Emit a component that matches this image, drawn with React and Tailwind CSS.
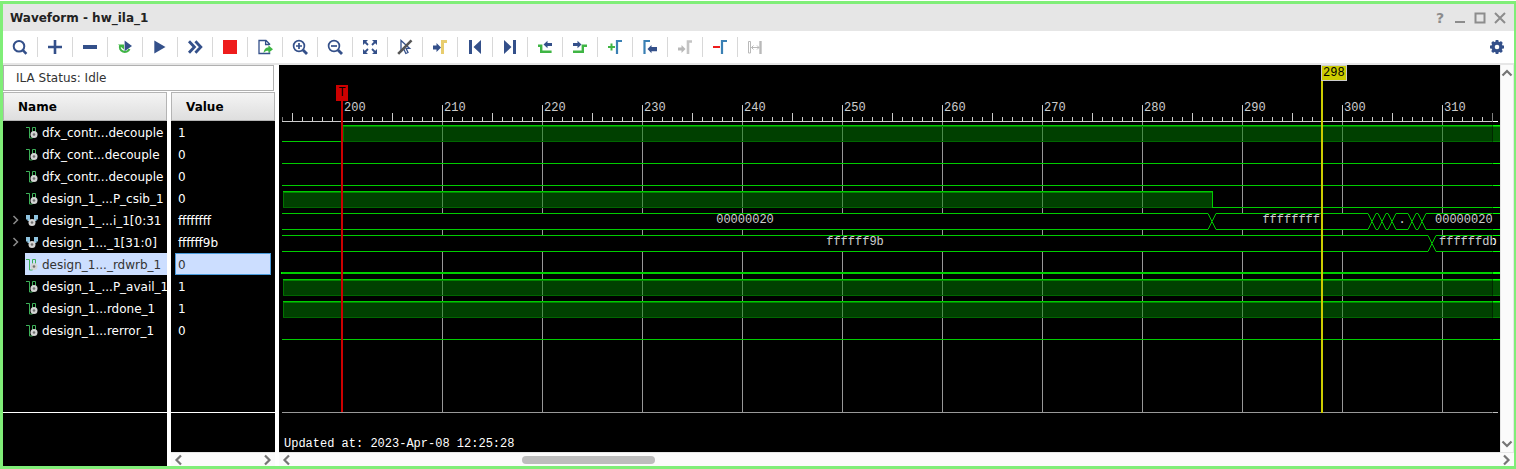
import React from "react";

const BLUE = "#34508a";
const GREEN = "#3fb544";
const STEEL = "#3a80b4";

const toolIcons = [
  ["Find", <g fill="none" stroke={BLUE} strokeWidth="2"><circle cx="7" cy="7.3" r="5.3" /><path d="M10.8 11.2l3.6 3.6" strokeWidth="2.6" /></g>],
  ["Add", <path d="M8 1v14M1 8h14" stroke={BLUE} strokeWidth="2.6" />],
  ["Remove", <path d="M1 8h14" stroke={BLUE} strokeWidth="4" />],
  ["Auto re-trigger", <g><path d="M3.2 6.500a5 4.600 0 1 0 9.300 3.500" fill="none" stroke={GREEN} strokeWidth="2" /><path d="M1 5.500h6v5z" fill={GREEN} /><path d="M7.6 1.6v10.6l7.4-5.3z" fill={BLUE} /></g>],
  ["Run trigger", <path d="M2.3 1.5v13L13.5 8z" fill={BLUE} />],
  ["Run trigger immediate", <path d="M2 2.3L7.4 8 2 13.7M8.4 2.3L13.8 8l-5.4 5.7" fill="none" stroke={BLUE} strokeWidth="2.8" />],
  ["Stop trigger", <rect x="1" y="1" width="14" height="14" fill="#ee1c1c" />],
  ["Export data", <g><path d="M12.6 6V5L9 1.5H2v13h10.6v-1.2M8.6 1.5v4h4" fill="none" stroke={BLUE} strokeWidth="1.3" /><path d="M6.6 14.2c.3-4 2-5.6 4.8-5.7V6.2l4.6 4-4.600 3.800v-2.300c-2.200 0-3.600.6-4.800 2.500z" fill={GREEN} /></g>],
  ["Zoom in", <g fill="none" stroke={BLUE} strokeWidth="1.7"><circle cx="7" cy="7" r="5.400" /><path d="M11 11l4 4" strokeWidth="2.8" /><path d="M4 7h6M7 4v6" /></g>],
  ["Zoom out", <g fill="none" stroke={BLUE} strokeWidth="1.7"><circle cx="7" cy="7" r="5.400" /><path d="M11 11l4 4" strokeWidth="2.8" /><path d="M4 7h6" /></g>],
  ["Zoom fit", <g><path d="M1 1h5L1 6zM15 1v5l-5-5zM1 15v-5l5 5zM15 15h-5l5-5z" fill={BLUE} /><path d="M2 2l4 4M14 2l-4 4M2 14l4-4M14 14l-4-4" stroke={BLUE} strokeWidth="1.8" /></g>],
  ["Cursor selection", <g><path d="M4 1.500v11l2.800-2.500 2 4.500 2.200-1-2-4.200h3.600z" fill="none" stroke={BLUE} strokeWidth="1.3" /><path d="M1.200 14.800L14.500 1.300" stroke="#555" strokeWidth="2.600" /></g>],
  ["Go to cursor", <g><path d="M1 6.500h3.500v-2.500l4.500 4.500-4.500 4.500v-2.500h-3.500z" fill={BLUE} /><path d="M10.500 15V2.500H15" fill="none" stroke="#e8cd6e" strokeWidth="3" /></g>],
  ["Previous transition", <path d="M2 1h3v14h-3zM14 1v14L6.500 8z" fill={BLUE} />],
  ["Next transition", <path d="M11 1h3v14h-3zM2 1v14l7.500-7z" fill={BLUE} />],
  ["Previous edge", <g><path d="M1 6.800h3.200v6H14.600" fill="none" stroke={GREEN} strokeWidth="2.400" /><path d="M6.500 5.500l4-3.800v2.200H15v3.200h-4.500v2.200z" fill={BLUE} /></g>],
  ["Next edge", <g><path d="M1 12.800h9.800v-6H15" fill="none" stroke={GREEN} strokeWidth="2.400" /><path d="M9.500 5.500l-4-3.800v2.200H1v3.200h4.500v2.200z" fill={BLUE} /></g>],
  ["Add marker", <g><path d="M1 8h7M4.500 4.500v7" stroke={GREEN} strokeWidth="2" /><path d="M10 15V2h5" fill="none" stroke={STEEL} strokeWidth="2.200" /></g>],
  ["Previous marker", <g><path d="M2.500 15V2H8" fill="none" stroke={STEEL} strokeWidth="2.200" /><path d="M5.500 10l4-4v2H15v4.200H9.500v2z" fill={BLUE} /></g>],
  ["Next marker", <g><path d="M1 8.500h3.500v-2.500l4 4-4 4v-2.500H1z" fill="#b9b9b9" /><path d="M11 15V2.500h4" fill="none" stroke="#c4c4c4" strokeWidth="2.600" /></g>],
  ["Delete marker", <g><path d="M1 8h7" stroke="#ee1c1c" strokeWidth="2" /><path d="M10 15V2h5" fill="none" stroke={STEEL} strokeWidth="2.200" /></g>],
  ["Swap cursors", <g fill="none" stroke="#b9b9b9"><path d="M1.500 2.500h2v11.500h-2z" /><path d="M13.500 2v13" strokeWidth="2.400" /><path d="M4.500 8.500h7.500M6.500 6.500l-2 2 2 2M10 6.500l2 2-2 2" /></g>],
];

const rows = [
  { name: "dfx_contr...decouple", value: "1" },
  { name: "dfx_cont...decouple", value: "0" },
  { name: "dfx_contr...decouple", value: "0" },
  { name: "design_1_...P_csib_1", value: "0" },
  { name: "design_1_...i_1[0:31", value: "ffffffff", bus: true },
  { name: "design_1..._1[31:0]", value: "ffffff9b", bus: true },
  { name: "design_1..._rdwrb_1", value: "0", selected: true },
  { name: "design_1_...P_avail_1", value: "1" },
  { name: "design_1...rdone_1", value: "1" },
  { name: "design_1...rerror_1", value: "0" },
];

function ToolIcon({ children }) {
  return <svg viewBox="0 0 16 16" className="size-4" aria-hidden="true">{children}</svg>;
}

function SignalIcon({ bus }) {
  return (
    <svg viewBox="0 0 12 12" className="size-3 shrink-0" aria-hidden="true">
      {bus ? (
        <path d="M0 0h4v6H1.500V4.500H0zM8 0h4v4.500h-1.500V6H8z" fill="#8fc4e0" />
      ) : (
        <path d="M0 .5h3.500v10.500H6.500V.5h3v5" fill="none" stroke="#3cb058" />
      )}
      <circle cx={bus ? 6 : 8} cy="7.500" r="3.500" fill="#d4d4d4" />
      <circle cx={bus ? 6 : 8} cy="7.500" r="1.300" fill="#707070" />
    </svg>
  );
}

function Chevron({ className, d }) {
  return (
    <svg viewBox="0 0 12 12" className={className} aria-hidden="true">
      <path d={d} fill="none" stroke="#757575" strokeWidth="2.200" />
    </svg>
  );
}

const LEFT = "M8 1.500L3.500 6 8 10.500";
const RIGHT = "M4 1.500L8.500 6 4 10.500";
const UP = "M1.500 8.500L6 4l4.500 4.500";
const DOWN = "M1.500 3.500L6 8l4.500-4.500";

const timeX = (n) => 63 + (n - 200) * 10;
const FAR = 6000;

function High({ y, from, to = FAR }) {
  const w = to - from;
  return (
    <g>
      <rect x={from} y={y - 15} width={w} height="16" fill="#00a000" fillOpacity=".5" />
      <rect x={from} y={y} width={w} height="1" fill="#008000" />
      <rect x={from} y={y - 15} width="1" height="15" fill="#009000" />
      <rect x={from} y={y - 15} width={w} height="1" fill="#00a800" />
      <rect x={from} y={y - 16} width={w} height="1" fill="#0f0" />
    </g>
  );
}

function Low({ y, from = 3, to = FAR, bold }) {
  return <rect x={from} y={bold ? y - 1 : y} width={to - from} height={bold ? 2 : 1} fill="#0f0" />;
}

function Bus({ y, edges }) {
  const top = y - 15.5;
  const mid = y - 7.5;
  const bottom = y + 0.5;
  return edges.slice(0, -1).map((a, i) => {
    const b = edges[i + 1];
    return (
      <polygon
        key={a}
        points={`${a},${mid} ${a + 4},${top} ${b - 4},${top} ${b},${mid} ${b - 4},${bottom} ${a + 4},${bottom}`}
        fill="#000"
        stroke="#0f0"
      />
    );
  });
}

function Wave() {
  const ticks = Array.from({ length: 121 }, (_, i) => 195 + i);
  return (
    <svg className="block h-[387px] w-full bg-black font-['Liberation_Mono',monospace] text-[12px]" role="img" aria-label="Signal waveforms">
      {ticks.map((n) =>
        n % 10 === 0 ? (
          <g key={n}>
            <rect x={timeX(n)} y="56" width="1" height="291" fill="#bfbfbf" />
            <rect x={timeX(n)} y="40" width="1" height="16" fill="#fff" />
            <text x={timeX(n) + 2} y="46" fill="#fff">{n}</text>
          </g>
        ) : (
          <rect key={n} x={timeX(n)} y={n % 5 === 0 ? 48 : 52} width="1" height={n % 5 === 0 ? 8 : 4} fill="#fff" />
        )
      )}
      <rect x="3" y="56" height="1" className="w-[calc(100%-5px)]" fill="#fff" />
      <rect x="3" y="52" width="1" height="4" fill="#999" />
      <rect x="3" y="347" height="1" className="w-[calc(100%-5px)]" fill="#c0c0c0" />

      <Low y={76} to={63} />
      <High y={76} from={64} />
      <Low y={98} />
      <Low y={120} />
      <High y={142} from={4} to={933} />
      <rect x="933" y="126" width="1" height="16" fill="#0f0" />
      <Low y={142} from={933} />
      <g clipPath="url(#plot)">
        <Bus y={164} edges={[-20, 933, 1093, 1103, 1113, 1133, 1143, FAR]} />
        <Bus y={186} edges={[-20, 1153, FAR]} />
      </g>
      <clipPath id="plot"><rect x="3" y="0" width={FAR} height="387" /></clipPath>
      <Low y={208} from={2} bold />
      <High y={230} from={4} />
      <High y={252} from={4} />
      <Low y={274} />

      <g fill="#fff">
        <text x="466" y="158" textAnchor="middle">00000020</text>
        <text x="1041" y="158" textAnchor="end">ffffffff</text>
        <text x="1123" y="158" textAnchor="middle">.</text>
        <text x="1156" y="158">00000020</text>
        <text x="576" y="180" textAnchor="middle">ffffff9b</text>
        <text x="1160" y="180">ffffffdb</text>
      </g>

      <rect x="57" y="20" width="12" height="16" fill="#f00" />
      <rect x="62" y="36" width="2" height="311" fill="#f00" />
      <text x="63" y="31" textAnchor="middle" fill="#000">T</text>

      <rect x="1042" y="0" width="26" height="16" fill="#fff" />
      <rect x="1043" y="1" width="24" height="14" fill="#ff0" />
      <rect x="1042" y="16" width="2" height="332" fill="#ff0" />
      <text x="1044" y="11" fill="#000">298</text>

      <rect x="3" y="0" width="1210" height="387" fill="#000" fillOpacity=".2" />
      <rect x="1213" y="40" width="1" height="308" fill="#000" fillOpacity=".5" />
      <text x="5" y="382" fill="#fff">Updated at: 2023-Apr-08 12:25:28</text>
    </svg>
  );
}

function HScroll({ thumb }) {
  return (
    <div className="flex h-[14px] items-center justify-between border-t border-[#e6e6e6] bg-[#fbfbfb] px-[2px]">
      <button aria-label="Scroll left"><Chevron className="size-3" d={LEFT} /></button>
      {thumb && (
        <div className="flex-1">
          <div className="ml-[19%] h-2 w-[11%] rounded-full bg-[#bdbdbd]" />
        </div>
      )}
      <button aria-label="Scroll right"><Chevron className="size-3" d={RIGHT} /></button>
    </div>
  );
}

const headCell =
  "h-[29px] border border-[#b4b4b4] bg-linear-to-b from-[#f4f4f4] to-[#dedede] px-[14px] py-0 text-left font-bold text-black";

export default function App() {
  return (
    <div className="flex min-h-screen flex-col bg-white pt-px font-['DejaVu_Sans',sans-serif] text-[12px] text-[#222]">
      <div className="flex flex-1 flex-col border-3 border-r-2 border-[#80ee78]">
        <header className="flex h-[27px] items-center justify-between bg-[#e6e6e6] pr-1 pl-[7px]">
          <h1 className="font-bold">Waveform - hw_ila_1</h1>
          <div className="flex text-[#8c8c8c]">
            <button aria-label="Help" className="w-5 text-[14px] leading-4 font-bold">?</button>
            {[
              ["Minimize", "M3 12h10"],
              ["Maximize", "M3.500 3.500h9v9h-9z"],
              ["Close", "M3 3l10 10M13 3L3 13"],
            ].map(([label, d]) => (
              <button key={label} aria-label={label} className="flex w-5 justify-center">
                <svg viewBox="0 0 16 16" className="size-4"><path d={d} fill="none" stroke="currentColor" strokeWidth="2" /></svg>
              </button>
            ))}
          </div>
        </header>

        <div className="flex h-[34px] items-center border-b-2 border-[#e6e6e6] bg-white" role="toolbar" aria-label="Waveform tools">
          {toolIcons.map(([label, icon], i) => (
            <React.Fragment key={label}>
              {i > 0 && <span className="h-5 w-px bg-[#d8d8d8]" />}
              <button aria-label={label} className="flex w-[34px] justify-center"><ToolIcon>{icon}</ToolIcon></button>
            </React.Fragment>
          ))}
          <button aria-label="Settings" className="ml-auto flex w-[34px] justify-center">
            <ToolIcon>
              <circle cx="8" cy="8" r="4" fill="none" stroke={BLUE} strokeWidth="3.400" />
              <path d="M8 1v3M8 12v3M1 8h3M12 8h3M3.100 3.100l2 2M10.900 10.900l2 2M12.900 3.100l-2 2M3.100 12.900l2-2" stroke={BLUE} strokeWidth="2.800" />
            </ToolIcon>
          </button>
        </div>

        <main className="flex flex-1">
          <section className="flex w-[272px] shrink-0 flex-col">
            <div className="mr-px mb-px flex h-[26px] items-center border border-[#b0b0b0] px-3 text-[#333]">
              ILA Status: Idle
            </div>
            <div className="flex flex-1 gap-1">
              <div className="w-[164px] shrink-0 overflow-hidden bg-black">
                <table className="w-full table-fixed border-separate border-spacing-0 text-white">
                  <thead><tr><th className={headCell}>Name</th></tr></thead>
                  <tbody>
                    {rows.map((r, i) => (
                      <tr key={i}>
                        <td className="h-[22px] p-0">
                          <div className="flex h-[22px] items-center">
                            <div className="flex w-[22px] shrink-0 justify-center pl-[3px]">
                              {r.bus && (
                                <button aria-label={`Expand ${r.name}`}>
                                  <svg viewBox="0 0 12 12" className="size-3"><path d="M3.500 2l4 4-4 4" fill="none" stroke="#8c8c8c" strokeWidth="1.500" /></svg>
                                </button>
                              )}
                            </div>
                            <div className={`flex h-full flex-1 items-center gap-1 pt-px pl-px whitespace-nowrap ${r.selected ? "bg-[#ccdeff] text-[#333]" : ""}`}>
                              <SignalIcon bus={r.bus} />
                              {r.name}
                            </div>
                          </div>
                        </td>
                      </tr>
                    ))}
                  </tbody>
                </table>
                <div className="mt-[71px] h-px bg-white" />
              </div>
              <div className="flex w-[104px] shrink-0 flex-col">
                <div className="flex-1 bg-black">
                  <table className="w-full table-fixed border-separate border-spacing-0 text-white">
                    <thead><tr><th className={headCell}>Value</th></tr></thead>
                    <tbody>
                      {rows.map((r, i) => (
                        <tr key={i}>
                          <td className="h-[22px] p-0">
                            <div className={`mx-1 flex h-[22px] items-center border px-[2px] pt-px ${r.selected ? "border-[#4a9bdc] bg-[#ccdeff] text-[#333]" : "border-transparent"}`}>
                              {r.value}
                            </div>
                          </td>
                        </tr>
                      ))}
                    </tbody>
                  </table>
                  <div className="mt-[71px] h-px bg-white" />
                </div>
                <HScroll />
              </div>
            </div>
          </section>

          <section className="ml-1 flex min-w-0 flex-1 flex-col">
            <div className="flex flex-1">
              <div className="min-w-0 flex-1 bg-black"><Wave /></div>
              <div className="flex w-[14px] flex-col items-center justify-between border-x border-[#e6e6e6] bg-[#fbfbfb] py-[2px]">
                <button aria-label="Scroll up"><Chevron className="size-3" d={UP} /></button>
                <button aria-label="Scroll down"><Chevron className="size-3" d={DOWN} /></button>
              </div>
            </div>
            <HScroll thumb />
          </section>
        </main>
      </div>
    </div>
  );
}
